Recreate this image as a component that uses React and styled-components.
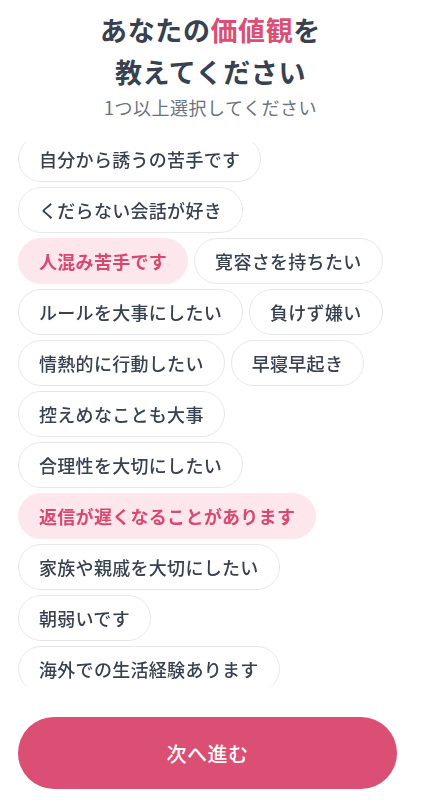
import React, { useEffect, useRef, useState } from 'react';
import styled, { createGlobalStyle } from 'styled-components';

const GlobalStyle = createGlobalStyle`
  * { box-sizing: border-box; }
  html, body { margin: 0; padding: 0; background: #ffffff; }
  body {
    font-family: "Noto Sans CJK JP", "Noto Sans", sans-serif;
    color: #374151;
    -webkit-font-smoothing: antialiased;
  }
`;

const Page = styled.div`
  height: 100vh;
  display: flex;
  flex-direction: column;
  background: #ffffff;
`;

const Header = styled.header`
  padding: 9px 18px 0;
  text-align: center;
`;

const Title = styled.h1`
  margin: 0;
  font-size: 27px;
  line-height: 42px;
  font-weight: 700;
  color: #374151;
  letter-spacing: 0.6px;
`;

const Accent = styled.span`
  color: #db4f74;
`;

const Subtitle = styled.p`
  margin: 1px 0 0;
  font-size: 18px;
  line-height: 26px;
  font-weight: 400;
  color: #6b7280;
  letter-spacing: 0.5px;
`;

const ListArea = styled.div`
  flex: 1;
  min-height: 0;
  margin-top: 22px;
  padding: 0 18px;
  overflow-y: auto;
  scrollbar-width: none;
  mask-image: linear-gradient(to bottom, #000 calc(100% - 8px), transparent);
  &::-webkit-scrollbar { display: none; }
`;

const ChipWrap = styled.div`
  display: flex;
  flex-wrap: wrap;
  align-items: flex-start;
  gap: 5px 6px;
  padding-bottom: 20px;
`;

const Chip = styled.button`
  appearance: none;
  font-family: inherit;
  font-size: 18px;
  line-height: 26px;
  letter-spacing: 0.3px;
  padding: 9px 20px;
  border-radius: 999px;
  border: 1px solid ${(p) => (p.$selected ? '#fde7ec' : '#e5e7eb')};
  background: ${(p) => (p.$selected ? '#fde7ec' : '#ffffff')};
  color: ${(p) => (p.$selected ? '#d9486f' : '#374151')};
  font-weight: ${(p) => (p.$selected ? 700 : 500)};
  white-space: nowrap;
  cursor: pointer;
`;

const Footer = styled.footer`
  padding: 27px 24px 17px 18px;
`;

const NextButton = styled.button`
  appearance: none;
  width: 100%;
  height: 72px;
  border: none;
  border-radius: 999px;
  background: #db4f74;
  color: #ffffff;
  font-family: inherit;
  font-size: 20px;
  font-weight: 500;
  letter-spacing: 0.5px;
  cursor: pointer;
`;

const values = [
  '自分から誘うの苦手です',
  'くだらない会話が好き',
  '人混み苦手です',
  '寛容さを持ちたい',
  'ルールを大事にしたい',
  '負けず嫌い',
  '情熱的に行動したい',
  '早寝早起き',
  '控えめなことも大事',
  '合理性を大切にしたい',
  '返信が遅くなることがあります',
  '家族や親戚を大切にしたい',
  '朝弱いです',
  '海外での生活経験あります',
];

export default function App() {
  const [selected, setSelected] = useState(['人混み苦手です', '返信が遅くなることがあります']);
  const listRef = useRef(null);

  useEffect(() => {
    if (listRef.current) listRef.current.scrollTop = 6;
  }, []);

  const toggle = (v) =>
    setSelected((s) => (s.includes(v) ? s.filter((x) => x !== v) : [...s, v]));

  return (
    <Page>
      <GlobalStyle />
      <Header>
        <Title>
          あなたの<Accent>価値観</Accent>を
          <br />
          教えてください
        </Title>
        <Subtitle>1つ以上選択してください</Subtitle>
      </Header>
      <ListArea ref={listRef}>
        <ChipWrap>
          {values.map((v) => (
            <Chip key={v} $selected={selected.includes(v)} onClick={() => toggle(v)}>
              {v}
            </Chip>
          ))}
        </ChipWrap>
      </ListArea>
      <Footer>
        <NextButton>次へ進む</NextButton>
      </Footer>
    </Page>
  );
}
